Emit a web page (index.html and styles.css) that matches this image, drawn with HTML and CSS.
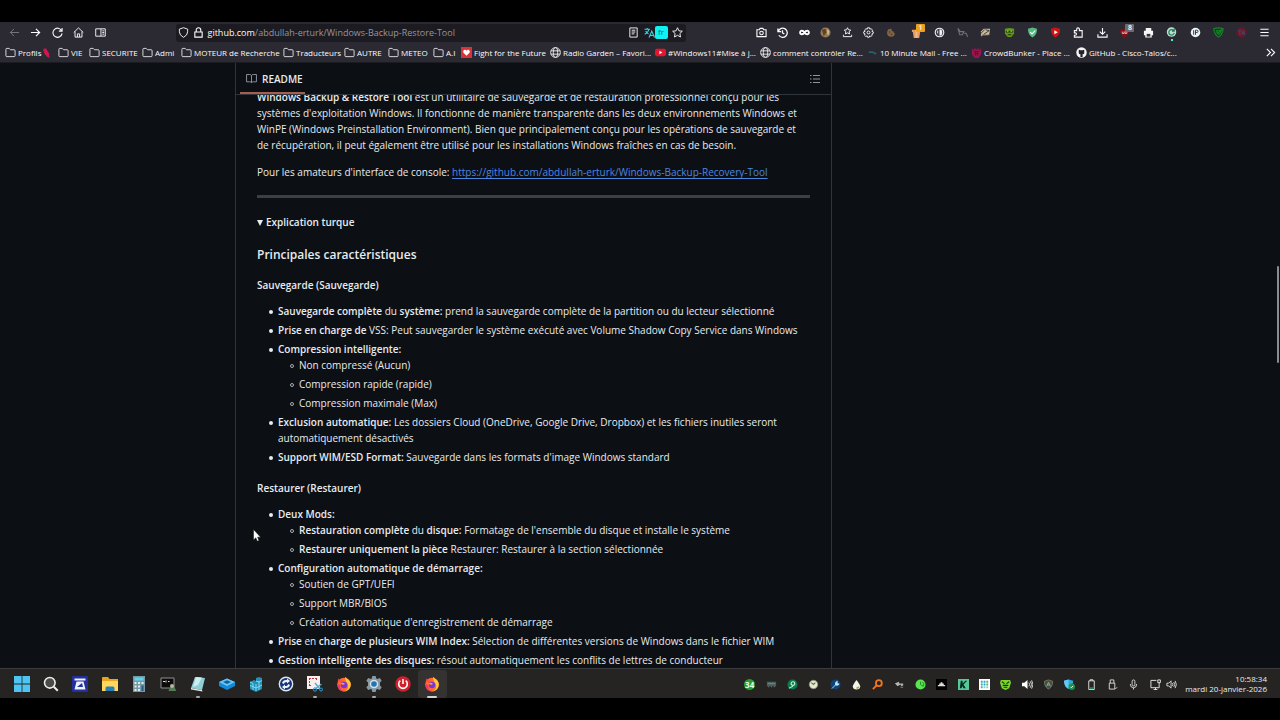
FILE: index.html
```html
<!DOCTYPE html>
<html lang="fr">
<head>
    <meta charset="UTF-8">
    <meta name="viewport" content="width=device-width, initial-scale=1.0">
    <title>Windows-Backup-Restore-Tool</title>
    <link rel="stylesheet" href="styles.css">
</head>
<body>
    <svg class="defs" aria-hidden="true">
        <defs>
            <symbol id="folder" viewBox="0 0 12 12"><path d="M1 9.500v-7q0-1 1-1h2.600l1.400 1.500h4q1 0 1 1v5.500q0 1-1 1h-8q-1 0-1-1z" fill="none" stroke="#e4e4e8"/></symbol>
            <symbol id="globe" viewBox="0 0 12 12"><g fill="none" stroke="#f0f0f2"><circle cx="6" cy="6" r="5.300"/><ellipse cx="6" cy="6" rx="2.400" ry="5.300"/><path d="M1 4.200h10M1 7.800h10"/></g></symbol>
            <symbol id="firefox" viewBox="0 0 16 16">
                <circle cx="8" cy="8.600" r="6.800" fill="#ff6a2b"/>
                <path d="M9 .5c1 2 4.500 2.500 5.600 6.500 1 5-3 8.600-7 8.500 4-1 5-4 4.500-6.500S9 6 9 .5z" fill="#ffc83a"/>
                <path d="M1.800 5L2.600 2.500 4.500 4.500 8 5 6 7z" fill="#ff4a4a"/>
                <path d="M1.400 8c0 5 3.600 7.500 7 7.500-3-1-4.500-3-4-6z" fill="#f0327a"/>
                <circle cx="8" cy="9" r="3.200" fill="#7a35d8"/>
                <path d="M4.500 7.500c2-1.200 3.500-.5 4.500.5L7 9z" fill="#ff9a2e"/>
            </symbol>
        </defs>
    </svg>

    <div class="screen">
        <header class="browser">
            <nav class="toolbar">
                <div class="nav-buttons">
                    <button class="icon-btn dim" aria-label="Précédent"><svg viewBox="0 0 12 12"><path d="M11 6H1.500M5.500 2l-4 4 4 4" fill="none" stroke="currentColor"/></svg></button>
                    <button class="icon-btn" aria-label="Suivant"><svg viewBox="0 0 12 12"><path d="M1 6h9.500M6.500 2l4 4-4 4" fill="none" stroke="currentColor" stroke-width="1.300"/></svg></button>
                    <button class="icon-btn" aria-label="Actualiser"><svg viewBox="0 0 12 12"><path d="M10.500 4A5 5 0 1 0 11 7M11 1v3.500H7.500" fill="none" stroke="currentColor" stroke-width="1.200"/></svg></button>
                    <button class="icon-btn" aria-label="Accueil"><svg viewBox="0 0 12 12"><path d="M.8 6L6 1l5.200 5M2.200 5v6h7.600V5M4.800 11V7.500h2.400V11" fill="none" stroke="currentColor"/></svg></button>
                    <button class="icon-btn" aria-label="Panneau latéral"><svg viewBox="0 0 12 12"><path d="M.8 2h10.400v8H.8zM6.500 2v8M8 4.200h2M8 6h2M8 7.800h2" fill="none" stroke="currentColor"/></svg></button>
                </div>

                <div class="urlbar">
                    <svg viewBox="0 0 12 12"><path d="M6 .8l4.500 1.500v3q0 3.700-4.500 6-4.500-2.300-4.500-6v-3z" fill="none" stroke="currentColor"/></svg>
                    <svg viewBox="0 0 12 12"><path d="M2 5.500h8v5.500H2zM3.500 5.500V3.300a2.500 2.500 0 0 1 5 0v2.200" fill="none" stroke="currentColor" stroke-width="1.200"/></svg>
                    <span class="url"><b>github.com</b>/abdullah-erturk/Windows-Backup-Restore-Tool</span>
                    <button class="icon-btn" aria-label="Mode lecture"><svg viewBox="0 0 12 12"><path d="M2 1h8v10H2zM4 3.500h4M4 5.500h4M4 7.500h3" fill="none" stroke="currentColor"/></svg></button>
                    <span class="translate">
                        <svg viewBox="0 0 12 12"><path d="M.5 2.500h6M3.500 1v1.500M5.500 2.500Q4.500 6 .8 8M1.800 4.500Q3 6.500 5 7.500M5.500 11.500L8.500 4.500l3 7M6.500 9.300h4" fill="none" stroke="#37d7e6" stroke-width="1.200"/></svg>
                        <span class="lang">fr</span>
                    </span>
                    <button class="icon-btn" aria-label="Marque-page"><svg viewBox="0 0 12 12"><path d="M6 .8l1.600 3.400 3.700.4-2.700 2.500.7 3.800L6 9.100l-3.300 1.800.7-3.800L.7 4.600l3.700-.4z" fill="none" stroke="currentColor"/></svg></button>
                </div>

                <div class="extensions ext-left">
                    <button class="icon-btn" aria-label="Capture"><svg viewBox="0 0 12 12"><path d="M1 3h2.500l1-1.500h3L8.500 3H11v7.500H1z" fill="none" stroke="currentColor" stroke-width="1.200"/><circle cx="6" cy="6.600" r="1.900" fill="none" stroke="currentColor" stroke-width="1.200"/></svg></button>
                    <button class="icon-btn" aria-label="Historique"><svg viewBox="0 0 12 12"><path d="M1 1.500v3.500h3.500M1.500 4.500A5 5 0 1 1 2 9M6 3.500v3l2 1" fill="none" stroke="currentColor" stroke-width="1.400"/></svg></button>
                    <button class="icon-btn" aria-label="Infini"><svg viewBox="0 0 12 12"><path d="M6 6C4.500 3.500 1.200 3.300 1.200 6S4.500 8.500 6 6s4.800-2.700 4.800 0S7.500 8.500 6 6z" fill="none" stroke="#fff" stroke-width="2"/></svg></button>
                    <button class="icon-btn" aria-label="Profil"><svg viewBox="0 0 12 12"><circle cx="6" cy="6" r="5.500" fill="#9b7a52"/><path d="M2 3l4-1 1 4-3 4z" fill="#5e432b"/><path d="M8 2l2 3-1 4-1-2z" fill="#d8c4a2"/></svg></button>
                    <button class="icon-btn" aria-label="Favoris"><svg viewBox="0 0 12 12"><path d="M6 .8l1.100 2.300 2.500.3-1.800 1.700.4 2.500L6 6.400 3.800 7.600l.4-2.500-1.800-1.700 2.500-.3zM1.500 8.500v2h9v-2" fill="none" stroke="currentColor"/></svg></button>
                    <button class="icon-btn" aria-label="Réglages"><svg viewBox="0 0 12 12"><path d="M5 .8h2l.4 1.500 1.500-.5 1.400 1.600-.6 1.400 1.500.5v1.600l-1.500.6.4 1.500-1.500 1.300-1.300-.6-.5 1.500H5l-.5-1.500-1.500.5L1.700 9l.6-1.500L.8 7V5.200l1.500-.5-.5-1.500 1.400-1.300 1.400.5z" fill="none" stroke="currentColor"/><circle cx="6" cy="6" r="1.600" fill="none" stroke="currentColor"/></svg></button>
                    <button class="icon-btn" aria-label="Cookies"><svg viewBox="0 0 12 12"><path d="M7 2a4.300 4.300 0 1 0 3.800 5q-1.500 0-1.500-2Q7 5 7 2z" fill="#806340"/><circle cx="5" cy="5.500" r=".8" fill="#443526"/><circle cx="7" cy="8" r=".8" fill="#443526"/></svg></button>
                </div>

                <div class="extensions ext-right">
                    <button class="icon-btn" aria-label="Cadeau"><svg viewBox="0 0 12 12"><path d="M1 3h10v2.500H1zM2 5.500h8L9 12H3z" fill="#e79a62"/><path d="M5 3h2v9H5z" fill="#f6b989"/></svg><span class="badge orange">1</span></button>
                    <button class="icon-btn" aria-label="Contraste"><svg viewBox="0 0 12 12"><circle cx="6" cy="6" r="4.700" fill="#3c3b44" stroke="#f2f2f4" stroke-width="1.200"/><path d="M6 2.500q3 0 3 3.500T6 9.500z" fill="#f2f2f4"/><path d="M4 4v3" stroke="#f2f2f4"/></svg></button>
                    <button class="icon-btn" aria-label="Lapin"><svg viewBox="0 0 12 12"><path d="M1 1.500L3.500 5h4L6 8.500H3zM8 7q2-1 2.500 1T12 10.500" fill="none" stroke="#71717a" stroke-width="1.200"/></svg></button>
                    <button class="icon-btn" aria-label="Zèbre"><svg viewBox="0 0 12 12"><path d="M1 5l3-3 7 0-1 7-9 1z" fill="#cbbba1"/><path d="M1 7l4-4M4 8l6-4M2 9h8M6 3l4 1" stroke="#3c332b"/></svg></button>
                    <button class="icon-btn" aria-label="Masque"><svg viewBox="0 0 12 12"><path d="M1 2l5-1 5 1v5L8 11H4L1 7z" fill="#5f9c14"/><path d="M2 4h8v2H2zM4 8h4v1H4z" fill="#20340c"/><path d="M3 4.500h2M7 4.500h2" stroke="#d6f36a"/></svg></button>
                    <button class="icon-btn" aria-label="Protection"><svg viewBox="0 0 12 12"><path d="M6 .5l5 1.500q0 7-5 9.500Q1 9 1 2z" fill="#55b982"/><path d="M3.500 5.500l2 2 3.500-3.500" fill="none" stroke="#fff" stroke-width="1.200"/></svg></button>
                    <button class="icon-btn" aria-label="Vidéo"><svg viewBox="0 0 12 12"><path d="M6 .5l5 1.500q0 7-5 9.500Q1 9 1 2z" fill="#d31313"/><path d="M4.700 3.500L8.500 5.700 4.700 8z" fill="#fff"/></svg></button>
                    <button class="icon-btn" aria-label="Extensions"><svg viewBox="0 0 12 12"><path d="M1.500 4h2.500V2.500a1.500 1.500 0 0 1 3 0V4h3v7H1.500V9h1a1.300 1.300 0 0 0 0-2.600h-1z" fill="none" stroke="currentColor" stroke-width="1.200"/></svg></button>
                    <button class="icon-btn" aria-label="Téléchargements"><svg viewBox="0 0 12 12"><path d="M6 1v7M3 5l3 3 3-3M1 8v3h10V8" fill="none" stroke="currentColor" stroke-width="1.200"/></svg></button>
                    <button class="icon-btn" aria-label="Bloqueur"><svg viewBox="0 0 12 12"><path d="M5 1.500l5 1.500q0 6-5 8.500Q0 9 0 3z" fill="#8c0b14"/><path d="M2.500 5v2h2V5M5.500 5v2h2V5z" fill="none" stroke="#e7b8bb"/></svg><span class="badge gray">8</span></button>
                    <button class="icon-btn" aria-label="Imprimer"><svg viewBox="0 0 12 12"><path d="M3 1h6v3H3zM1 4h10v5H9.500v2.500h-7V9H1z" fill="#f7f7f8"/><path d="M4 7.500h4v3H4z" fill="#35343d"/></svg></button>
                    <button class="icon-btn" aria-label="Rotation"><svg viewBox="0 0 12 12"><circle cx="6" cy="5.500" r="5.200" fill="#b5e2cf"/><path d="M8.500 4A3 3 0 1 0 9 6.500M9 2v2.500H6.500" fill="none" stroke="#2c765b" stroke-width="1.300"/></svg><span class="dot"></span></button>
                    <button class="icon-btn" aria-label="Adresse IP"><svg viewBox="0 0 12 12"><circle cx="6" cy="6" r="5.200" fill="#eaf0f4"/><path d="M4 3.500v5M6 8.500v-5h1.500a1 1 0 0 1 0 2.500H6" fill="none" stroke="#263038"/></svg></button>
                    <button class="icon-btn" aria-label="Filtre"><svg viewBox="0 0 12 12"><path d="M.8 2Q6 0 11.200 2 10 9 6 11 2 9 .8 2zM3 4q3-1 6 0-1 4-3 4-2-1-2-3l2 1 4-4" fill="none" stroke="#128623" stroke-width="1.200"/></svg></button>
                    <button class="icon-btn" aria-label="Assistant"><svg viewBox="0 0 12 12"><circle cx="6" cy="6" r="5.500" fill="#711525"/><path d="M2.500 4h3.500M4.200 4v4.500M6.500 8.500L8 4l1.500 4.500M7 7h2" fill="none" stroke="#31517c"/></svg></button>
                    <button class="icon-btn" aria-label="Menu"><svg viewBox="0 0 12 12"><path d="M1.500 2.500h9M1.500 6h9M1.500 9.500h9" stroke="currentColor" stroke-width="1.200"/></svg></button>
                </div>
            </nav>

            <nav class="bookmarks">
                <a href="#"><svg><use href="#folder"/></svg>Profils<svg class="parrot" viewBox="0 0 8 12"><path d="M0 3q2-3 4-1l1 2 2 3v3l1 2-3-1-3-3-1-3z" fill="#d3154f"/></svg></a>
                <a href="#"><svg><use href="#folder"/></svg>VIE</a>
                <a href="#"><svg><use href="#folder"/></svg>SECURITE</a>
                <a href="#"><svg><use href="#folder"/></svg>Admi</a>
                <a href="#"><svg><use href="#folder"/></svg>MOTEUR de Recherche</a>
                <a href="#"><svg><use href="#folder"/></svg>Traducteurs</a>
                <a href="#"><svg><use href="#folder"/></svg>AUTRE</a>
                <a href="#"><svg><use href="#folder"/></svg>METEO</a>
                <a href="#"><svg><use href="#folder"/></svg>A.I</a>
                <a href="#"><svg viewBox="0 0 12 12"><path d="M0 0h12v12H0z" fill="#d7333a"/><path d="M6 9.500L2.500 6V4l1.500-1h1l1 1 1-1h1l1.500 1v2z" fill="#fff"/></svg>Fight for the Future</a>
                <a href="#"><svg><use href="#globe"/></svg>Radio Garden – Favori...</a>
                <a href="#"><svg viewBox="0 0 12 12"><rect y="2" width="12" height="8" rx="2" fill="#e6142d"/><path d="M4.800 4L8 6 4.800 8z" fill="#fff"/></svg>#Windows11#Mise à j...</a>
                <a href="#"><svg><use href="#globe"/></svg>comment contrôler Re...</a>
                <a href="#"><svg viewBox="0 0 12 12"><path d="M2 5.500h4l4 2" fill="none" stroke="#28606f" stroke-width="2"/></svg>10 Minute Mail - Free ...</a>
                <a href="#"><svg viewBox="0 0 12 12"><path d="M1 1l2 3 1-3 2 2 2-2 1 3 2-3v7l-3 4H4L1 8z" fill="#9c174f"/><path d="M3 5h6M3 7h6M5 4v6M7 4v6" stroke="#352032" stroke-width=".7"/></svg>CrowdBunker - Place ...</a>
                <a href="#"><svg viewBox="0 0 12 12"><circle cx="6" cy="6" r="5.700" fill="#f5f5f5"/><path d="M3 3l2 .5h2L9 3v3.500Q9 8 7.200 8v3H4.800V8Q3 8 3 6.500z" fill="#24232b"/></svg>GitHub - Cisco-Talos/c...</a>
                <button class="icon-btn" aria-label="Plus de marque-pages"><svg viewBox="0 0 12 12"><path d="M2 2l4 4-4 4M6.500 2l4 4-4 4" fill="none" stroke="currentColor" stroke-width="1.200"/></svg></button>
            </nav>
        </header>

        <main class="page">
            <div class="layout">
                <section class="readme">
                    <div class="readme-header">
                        <a class="tab" href="#"><svg viewBox="0 0 16 16"><path d="M.8 2.200h4.500q2.200 0 2.700 1.500.5-1.500 2.700-1.500h4.500v10.600h-4.700q-1.900 0-2.500 1.200-.6-1.200-2.500-1.200H.8zM8 3.800V14" fill="none" stroke="#8b949e" stroke-width="1.400"/></svg>README</a>
                        <button class="outline" aria-label="Sommaire"><svg viewBox="0 0 12 12"><path d="M1 2.500h1.500M1 6h1.500M1 9.500h1.500M4 2.500h7M4 6h7M4 9.500h7" stroke="#8b949e"/></svg></button>
                    </div>
                    <article class="markdown">
                        <p>
                            <strong>Windows Backup &amp; Restore Tool</strong> est un utilitaire de sauvegarde et de restauration professionnel conçu pour les<br>
                            systèmes d'exploitation Windows. Il fonctionne de manière transparente dans les deux environnements Windows et<br>
                            WinPE (Windows Preinstallation Environment). Bien que principalement conçu pour les opérations de sauvegarde et<br>
                            de récupération, il peut également être utilisé pour les installations Windows fraîches en cas de besoin.
                        </p>
                        <p>Pour les amateurs d'interface de console: <a href="#">https://github.com/abdullah-erturk/Windows-Backup-Recovery-Tool</a></p>
                        <hr>
                        <details open>
                            <summary>Explication turque</summary>
                            <h3>Principales caractéristiques</h3>
                            <h4>Sauvegarde (Sauvegarde)</h4>
                            <ul>
                                <li><strong>Sauvegarde complète</strong> du <strong>système:</strong> prend la sauvegarde complète de la partition ou du lecteur sélectionné</li>
                                <li><strong>Prise en charge de</strong> VSS: Peut sauvegarder le système exécuté avec Volume Shadow Copy Service dans Windows</li>
                                <li><strong>Compression intelligente:</strong>
                                    <ul>
                                        <li>Non compressé (Aucun)</li>
                                        <li>Compression rapide (rapide)</li>
                                        <li>Compression maximale (Max)</li>
                                    </ul>
                                </li>
                                <li><strong>Exclusion automatique:</strong> Les dossiers Cloud (OneDrive, Google Drive, Dropbox) et les fichiers inutiles seront<br>automatiquement désactivés</li>
                                <li><strong>Support WIM/ESD Format:</strong> Sauvegarde dans les formats d'image Windows standard</li>
                            </ul>
                            <h4>Restaurer (Restaurer)</h4>
                            <ul>
                                <li><strong>Deux Mods:</strong>
                                    <ul>
                                        <li><strong>Restauration complète</strong> du <strong>disque:</strong> Formatage de l'ensemble du disque et installe le système</li>
                                        <li><strong>Restaurer uniquement la pièce</strong> Restaurer: Restaurer à la section sélectionnée</li>
                                    </ul>
                                </li>
                                <li><strong>Configuration automatique de démarrage:</strong>
                                    <ul>
                                        <li>Soutien de GPT/UEFI</li>
                                        <li>Support MBR/BIOS</li>
                                        <li>Création automatique d'enregistrement de démarrage</li>
                                    </ul>
                                </li>
                                <li><strong>Prise</strong> en <strong>charge de plusieurs WIM Index:</strong> Sélection de différentes versions de Windows dans le fichier WIM</li>
                                <li><strong>Gestion intelligente des disques:</strong> résout automatiquement les conflits de lettres de conducteur</li>
                            </ul>
                        </details>
                    </article>
                </section>
            </div>
            <div class="scroll-thumb"></div>
        </main>

        <footer class="taskbar">
            <div class="apps">
                <button aria-label="Démarrer"><svg viewBox="0 0 16 16"><path d="M0 0h7.600v7.600H0zM8.400 0H16v7.600H8.400zM0 8.400h7.600V16H0zM8.400 8.400H16V16H8.400z" fill="#4fc3f2"/></svg></button>
                <button aria-label="Rechercher"><svg viewBox="0 0 16 16"><circle cx="6.800" cy="6.800" r="5.300" fill="#4a4a4a" stroke="#ededed" stroke-width="1.600"/><path d="M10.800 10.800l4 4" stroke="#ededed" stroke-width="2"/></svg></button>
                <button aria-label="Numériser"><svg viewBox="0 0 16 16"><rect width="16" height="16" rx="1" fill="#23309b"/><path d="M2.500 2.500h11v2h-11zM4.500 5.500h7l2 8h-11z" fill="#eef2ff"/><path d="M5 11l5-4 1 4z" fill="#23309b"/></svg></button>
                <button aria-label="Explorateur"><svg viewBox="0 0 16 16"><path d="M0 2q0-1 1-1h5l1.500 2H16v12H0z" fill="#e5a522"/><path d="M0 5h16v10H0z" fill="#ffd75e"/><path d="M3.500 15v-3q0-1.500 1.500-1.500h6q1.500 0 1.500 1.500v3z" fill="#2680b8"/></svg></button>
                <button aria-label="Calculatrice"><svg viewBox="0 0 16 16"><path d="M2 0h12v16H2z" fill="#7799a5"/><path d="M3.500 1.500h9v3h-9z" fill="#5fd3ed"/><path d="M3.500 6h2v2h-2zM7 6h2v2H7zM10.500 6h2v2h-2zM3.500 9.500h2v2h-2zM7 9.500h2v2H7zM3.500 13h2v2h-2zM7 13h2v2H7z" fill="#e2edf0"/><path d="M10.500 9.500h2V15h-2z" fill="#225a82"/></svg></button>
                <button aria-label="Terminal"><svg viewBox="0 0 16 16"><path d="M1 2h13v10H1z" fill="#0b0b0b" stroke="#909090"/><path d="M3 5.500h2M6 4.500v2M8 5.500h1.500" stroke="#ddd"/><path d="M8.500 15q1-4 4-4t3.500 4z" fill="#557c56"/><circle cx="12" cy="10" r="2" fill="#b7b89c"/></svg></button>
                <button class="running" aria-label="Bloc-notes"><svg viewBox="0 0 16 16"><path d="M5 1l10 1-3 12-11-2z" fill="#8fcfd5"/><path d="M6 1l6 .5L8 9l-5 2z" fill="#cceeee"/><path d="M1 12l11 2 .5 1.500L1 13.500z" fill="#e8e8e0"/></svg></button>
                <button aria-label="Boîte"><svg viewBox="0 0 16 16"><path d="M0 6l8-3.500L16 6v4l-8 4-8-4z" fill="#1688d8"/><path d="M0 6l8-3.500L16 6l-8 4z" fill="#66c7f4"/><path d="M4 6l4-1.800L12 6 8 8z" fill="#135da8"/></svg></button>
                <button aria-label="Registre"><svg viewBox="0 0 16 16"><path d="M2 6l4-2 2 1V2l3-1 3 1v11l-6 3-6-3z" fill="#258fb8"/><path d="M2 6l3 1.500V14M8 8v7M11 5v9M2 9.500l6 2.500 6-3M8 5l3 1 3-1.500" fill="none" stroke="#7bdcf2"/></svg></button>
                <button aria-label="Synchroniser"><svg viewBox="0 0 16 16"><circle cx="8" cy="8" r="6.700" fill="#17377c" stroke="#dce6ef" stroke-width="1.400"/><path d="M4 7q1-3.500 5-3V2.500L12 5 9 7.500V6Q6 6 6 8zM12 9q-1 3.500-5 3v1.500L4 11l3-2.500V10q3 0 3-2z" fill="#f0f4fa"/></svg></button>
                <button class="running" aria-label="Capture d'écran"><svg viewBox="0 0 16 16"><path d="M0 0h13v13H0z" fill="#f7eeee"/><path d="M2 2.500h8M2.500 2v8M2 9.500h3M9.500 2v3" stroke="#b73b46" stroke-dasharray="2 1"/><path d="M8 7l5 6M14.500 8L8 13" stroke="#4fa9d6" stroke-width="1.400"/><circle cx="8" cy="13.500" r="1.700" fill="none" stroke="#2c9ed3"/><circle cx="14" cy="13.500" r="1.500" fill="none" stroke="#2c9ed3"/></svg></button>
                <button aria-label="Firefox"><svg><use href="#firefox"/></svg></button>
                <button class="running" aria-label="Paramètres"><svg viewBox="0 0 16 16"><path d="M6.300 0h3.400l.6 2.500 1 .5 2.500-1 1.900 2.800L14 6.600v2.800l1.700 1.800-1.900 2.800-2.500-1-1 .5-.6 2.500H6.300l-.6-2.500-1-.5-2.500 1-1.900-2.800L2 9.400V6.600L.3 4.800 2.200 2l2.500 1 1-.5z" fill="#8798a5"/><circle cx="8" cy="8" r="4.300" fill="#d6e1e7"/><circle cx="8" cy="8" r="2.800" fill="#2275b5"/></svg></button>
                <button aria-label="Arrêter"><svg viewBox="0 0 16 16"><circle cx="8" cy="8" r="7.700" fill="#cf202c"/><path d="M5.300 4.700a4.300 4.300 0 1 0 5.400 0M8 3v5" fill="none" stroke="#fff" stroke-width="1.600"/></svg></button>
                <button class="active" aria-label="Firefox actif"><svg><use href="#firefox"/></svg></button>
            </div>

            <div class="tray">
                <span><b class="temp">34</b></span>
                <span><svg viewBox="0 0 12 12"><path d="M1 3h10v5H1z" fill="#48605f"/><path d="M2 5h8M3 8v1M6 8v1M9 8v1" stroke="#7b8989"/></svg></span>
                <span><svg viewBox="0 0 12 12"><circle cx="6" cy="6" r="5.500" fill="#117a4d"/><path d="M2 10q4-1 5-3.500M4.500 5a2 2 0 1 1 4 0 2 2 0 0 1-4 0z" fill="none" stroke="#c7f5dc" stroke-width="1.200"/></svg></span>
                <span><svg viewBox="0 0 12 12"><circle cx="6" cy="6" r="4.600" fill="#e8e8d2" stroke="#8b8e80"/><path d="M3.500 4l2.500 2 2-2" fill="none" stroke="#4c7d34" stroke-width="1.200"/></svg></span>
                <span><svg viewBox="0 0 12 12"><circle cx="6" cy="6" r="5.500" fill="#0d4376"/><path d="M2 10.500l4-4M6 6.500q-1-3 2-4l-.5 2.500 2.500.5q-1 2-4 1z" fill="#c4e2f5" stroke="#c4e2f5"/></svg></span>
                <span><svg viewBox="0 0 12 12"><path d="M6 1q4 5 4 7a4 3.500 0 0 1-8 0q0-2 4-7z" fill="#f4f3e7"/><path d="M6 11q3 0 3-3L6 9z" fill="#bd9c38"/></svg></span>
                <span><svg viewBox="0 0 12 12"><circle cx="7.500" cy="4.500" r="3.200" fill="none" stroke="#ef7521" stroke-width="2"/><path d="M5 7l-4 4" stroke="#ef7521" stroke-width="2"/></svg></span>
                <span><svg viewBox="0 0 12 12"><path d="M1 5l4-2 1 2h4v2L8 8 7 6 4 8z" fill="#b4b4af"/><path d="M7 9h3" stroke="#858581"/></svg></span>
                <span><svg viewBox="0 0 12 12"><circle cx="6" cy="6" r="5.500" fill="#5be351"/><path d="M6 6V3M6 6l3 2M8 3q3 2 1 5" fill="none" stroke="#1d842c"/></svg></span>
                <span><svg viewBox="0 0 12 12"><path d="M0 0h12v12H0z" fill="#000"/><path d="M2 8V6.500h1.500V5H5V3.500h2V5h1.500v1.500H10V8z" fill="#deded8"/></svg></span>
                <span><svg viewBox="0 0 12 12"><path d="M0 0h12v12H0z" fill="#55c998"/><path d="M3 2h2v3l3-3h2L6 6l2.500 4H6L4.500 7.500 4 10H2z" fill="#082c20"/></svg></span>
                <span><svg viewBox="0 0 12 12"><path d="M0 0h12v12H0z" fill="#fff"/><path d="M2 2h2v2H2zM5 2h2v2H5zM2 5h2v2H2zM5 5h2v2H5z" fill="#27a4c7"/><path d="M8 2h2v2H8zM8 5h2v2H8zM2 8h2v2H2z" fill="#68aa68"/><path d="M5 8h2v2H5zM8 8h2v2H8z" fill="#76d2eb"/></svg></span>
                <span><svg viewBox="0 0 12 12"><path d="M1 1h10l1 3-2 6-4 2-4-2-2-6z" fill="#7ad62c"/><path d="M2 3l3 2M10 3L7 5M3 7h6M4 9h4" stroke="#15300c" stroke-width="1.200"/></svg></span>
                <span><svg viewBox="0 0 12 12"><path d="M0 4h2.500L6 1v10L2.500 8H0z" fill="#fff"/><path d="M7.500 4q1.500 2 0 4M9 2.500q3 3.500 0 7M10.500 1.500q3 4.500 0 9" fill="none" stroke="#e6e6e6"/></svg></span>
                <span><svg viewBox="0 0 12 12"><path d="M6 1l4.500 1.500q0 6-4.500 8.500Q1.500 8.500 1.500 2.500z" fill="#3c5143" stroke="#80735b"/><path d="M4 8l2-4.500L8 8M5 6.500h2" fill="none" stroke="#a0ad91"/></svg></span>
                <span><svg viewBox="0 0 12 12"><path d="M5 .5L10 2q0 6.500-5 9Q0 8.500 0 2z" fill="#33a4e1"/><path d="M5 .5V11Q0 8.500 0 2z" fill="#61c9f4"/><circle cx="8.500" cy="8.500" r="3.500" fill="#189447"/><path d="M7 8.500l1 1 2-2" fill="none" stroke="#fff"/></svg></span>
                <span><svg viewBox="0 0 12 12"><path d="M3 2h6v9.500H3zM4.500 2V.8h3V2" fill="none" stroke="#e5e5e5"/><path d="M4 9h4v2H4z" fill="#1c8b5a"/></svg></span>
                <span><svg viewBox="0 0 12 12"><path d="M3.500 4.500V1h4v3.500M2.500 4.500h6V11h-6zM9 11l2-2" fill="none" stroke="#ddd"/></svg></span>
                <span><svg viewBox="0 0 12 12"><rect x="4.500" y="1" width="3" height="6.500" rx="1.500" fill="none" stroke="#ddd"/><path d="M2.500 5.500q0 4 3.500 4t3.500-4M6 9.500v2" fill="none" stroke="#ddd"/></svg></span>
                <span><svg viewBox="0 0 12 12"><path d="M7 1.500H1v8h9V6M4 11.500h4M6 9.500v2M8.500 1h2.800v3H8.500zM10 4v2" fill="none" stroke="#eee"/></svg></span>
            </div>
            <svg class="volume" viewBox="0 0 12 12"><path d="M1 4.500h2L5.500 2v8L3 7.500H1zM7 4.500q1 1.500 0 3M8.500 3.300q2 2.700 0 5.400M10 2q2.600 4 0 8" fill="none" stroke="#ddd"/></svg>
            <time class="clock" datetime="2026-01-20T10:58:34">10:58:34<br>mardi 20-janvier-2026</time>
        </footer>

        <svg class="cursor" viewBox="0 0 8 13"><path d="M.5.5v10.500l2.300-2.200 1.500 3.400 1.700-.7L4.600 8.200h3z" fill="#fff" stroke="#111" stroke-width=".5"/></svg>
    </div>
</body>
</html>
```
FILE: styles.css
```css
* {
    box-sizing: border-box;
}

body {
    margin: 0;
    background: #000;
    color: #e8ebef;
    font-family: "Open Sans", "Noto Sans", sans-serif;
    font-size: 10px;
}

a {
    color: inherit;
    text-decoration: none;
}

button {
    padding: 0;
    border: none;
    background: none;
    color: inherit;
    font: inherit;
}

svg {
    display: block;
    flex: none;
}

.defs {
    position: absolute;
    width: 0;
    height: 0;
}

.screen {
    position: relative;
    display: flex;
    flex-direction: column;
    height: 100vh;
    padding: 22px 0;
    overflow: hidden;
}

/* Browser chrome */
.browser {
    flex: none;
    background: #2b2a33;
    color: #fbfbfe;
    border-bottom: 1px solid #1b1b22;
}

.toolbar {
    display: flex;
    align-items: center;
    height: 21px;
    padding: 0 9px 0 8px;
}

.icon-btn {
    position: relative;
    display: flex;
    align-items: center;
    justify-content: center;
    width: 12px;
    height: 12px;
}

.icon-btn svg,
.urlbar svg {
    width: 11px;
    height: 11px;
}

.icon-btn.dim {
    color: #7c7b85;
}

.nav-buttons {
    display: flex;
    justify-content: space-between;
    flex: none;
    width: 98px;
}

.urlbar {
    display: flex;
    align-items: center;
    gap: 4px;
    flex: 0 1 510px;
    height: 18px;
    margin: 0 auto;
    padding: 0 2px;
    border-radius: 3px;
    background: #1c1b22;
}

.url {
    flex: 1;
    color: #96959e;
    font-size: 9px;
    white-space: nowrap;
}

.url b {
    color: #fbfbfe;
    font-weight: 400;
}

.translate {
    display: flex;
    align-items: center;
}

.lang {
    width: 13px;
    height: 13px;
    border-radius: 2px;
    background: #0ff2f4;
    color: #17606a;
    font-size: 8px;
    line-height: 12px;
    text-align: center;
}

.extensions {
    display: flex;
    justify-content: space-between;
    flex: none;
}

.ext-left {
    width: 141px;
    margin-right: 14px;
}

.ext-right {
    width: 361px;
}

.badge {
    position: absolute;
    top: -3px;
    left: 6px;
    width: 9px;
    height: 8px;
    border-radius: 1px;
    color: #fff;
    font-size: 7px;
    font-weight: 600;
    line-height: 8px;
    text-align: center;
}

.badge.orange {
    background: #eda21c;
}

.badge.gray {
    background: #6c6c70;
}

.dot {
    position: absolute;
    bottom: -2px;
    left: 5px;
    width: 2px;
    height: 2px;
    background: #4ff0c8;
}

.bookmarks {
    display: grid;
    grid-template-columns: 53px 31px 53px 39px 102px 61px 44px 45px 28px 89px 105px 105px 107px 104px 105px 1fr 12px;
    align-items: center;
    height: 19px;
    padding: 0 4px 0 5px;
    font-size: 8px;
    white-space: nowrap;
}

.bookmarks a {
    display: flex;
    align-items: center;
    gap: 2px;
}

.bookmarks svg {
    width: 11px;
    height: 11px;
}

.bookmarks .parrot {
    width: 7px;
}

/* Page */
.page {
    position: relative;
    flex: 1;
    min-height: 0;
    overflow: hidden;
    background: #0c1015;
}

.layout {
    display: grid;
    grid-template-columns: minmax(0, 1fr) 197px;
    gap: 16px;
    max-width: 852px;
    height: 100%;
    margin: 0 auto;
    padding: 0 21px;
}

.readme {
    border: solid #2f353c;
    border-width: 0 1px;
}

.readme-header {
    position: relative;
    z-index: 1;
    display: flex;
    align-items: stretch;
    justify-content: space-between;
    height: 32px;
    padding: 0 10px 0 4px;
    border-bottom: 1px solid #2f353c;
    background: #0c1015;
}

.tab {
    display: flex;
    align-items: center;
    gap: 5px;
    padding: 2px 2px 0 6px;
    border-bottom: 2px solid #a85d51;
    font-weight: 600;
}

.tab svg {
    width: 11px;
    height: 11px;
}

.outline svg {
    width: 12px;
    height: 12px;
}

.markdown {
    margin-top: -6px;
    padding: 0 21px;
    line-height: 16px;
    white-space: nowrap;
}

.markdown p {
    margin: 0 0 11px;
}

.markdown a {
    color: #4c86e0;
    text-decoration: underline;
    text-underline-offset: 2px;
}

.markdown strong,
.markdown summary {
    font-weight: 600;
}

.markdown hr {
    height: 3px;
    margin: 15px 0 16px;
    border: none;
    background: #3a4047;
}

.markdown summary {
    list-style: none;
}

.markdown summary::before {
    content: "";
    display: inline-block;
    margin-right: 3px;
    border: solid transparent;
    border-width: 6px 3px 0;
    border-top-color: #e8ebef;
}

.markdown h3,
.markdown h4 {
    font-weight: 600;
}

.markdown h3 {
    margin: 16px 0 14px;
    font-size: 12px;
    line-height: 18px;
}

.markdown h4 {
    margin: 14px 0 11px;
    font-size: 10px;
    line-height: 14px;
}

.markdown ul + h4 {
    margin-top: 16px;
}

.markdown ul {
    margin: 0;
    padding-left: 21px;
    list-style: none;
}

.markdown li {
    position: relative;
}

.markdown li + li {
    margin-top: 3px;
}

.markdown li::before {
    content: "";
    position: absolute;
    top: 7px;
    left: -9px;
    width: 4px;
    height: 4px;
    border-radius: 50%;
    background: #e8ebef;
}

.markdown li li::before {
    box-sizing: border-box;
    border: 1px solid #a9adb2;
    background: none;
}

.scroll-thumb {
    position: absolute;
    top: 203px;
    right: 1px;
    width: 2px;
    height: 97px;
    border-radius: 1px;
    background: #8a8c8f;
}

/* Taskbar */
.taskbar {
    display: flex;
    align-items: stretch;
    flex: none;
    height: 30px;
    padding: 1px 13px 0 7px;
    border-top: 1px solid #3a3b3c;
    background: #252422;
}

.apps {
    display: flex;
    flex: 0 0 440px;
}

.apps button {
    position: relative;
    display: flex;
    align-items: center;
    justify-content: center;
    flex: 1;
}

.apps svg {
    width: 16px;
    height: 16px;
}

.apps .active {
    border-radius: 3px;
    background: #353331;
}

.apps .running::after,
.apps .active::after {
    content: "";
    position: absolute;
    bottom: 0;
    width: 4px;
    height: 2px;
    border-radius: 1px;
    background: #aaa9a7;
}

.apps .active::after {
    width: 10px;
    background: #d5d3d0;
}

.tray {
    display: flex;
    flex: 0 0 427px;
    margin-left: auto;
}

.tray span {
    display: flex;
    align-items: center;
    justify-content: center;
    flex: 1;
}

.tray svg,
.volume {
    width: 11px;
    height: 11px;
}

.volume {
    align-self: center;
}

.temp {
    width: 11px;
    height: 11px;
    border-radius: 50%;
    background: #2b9a35;
    color: #e9ffe5;
    font-size: 8px;
    line-height: 11px;
    text-align: center;
}

.clock {
    width: 90px;
    padding-top: 4px;
    font-size: 8px;
    line-height: 10px;
    text-align: right;
    white-space: nowrap;
}

.cursor {
    position: absolute;
    top: 529px;
    left: 253px;
    width: 8px;
    height: 13px;
}
```
